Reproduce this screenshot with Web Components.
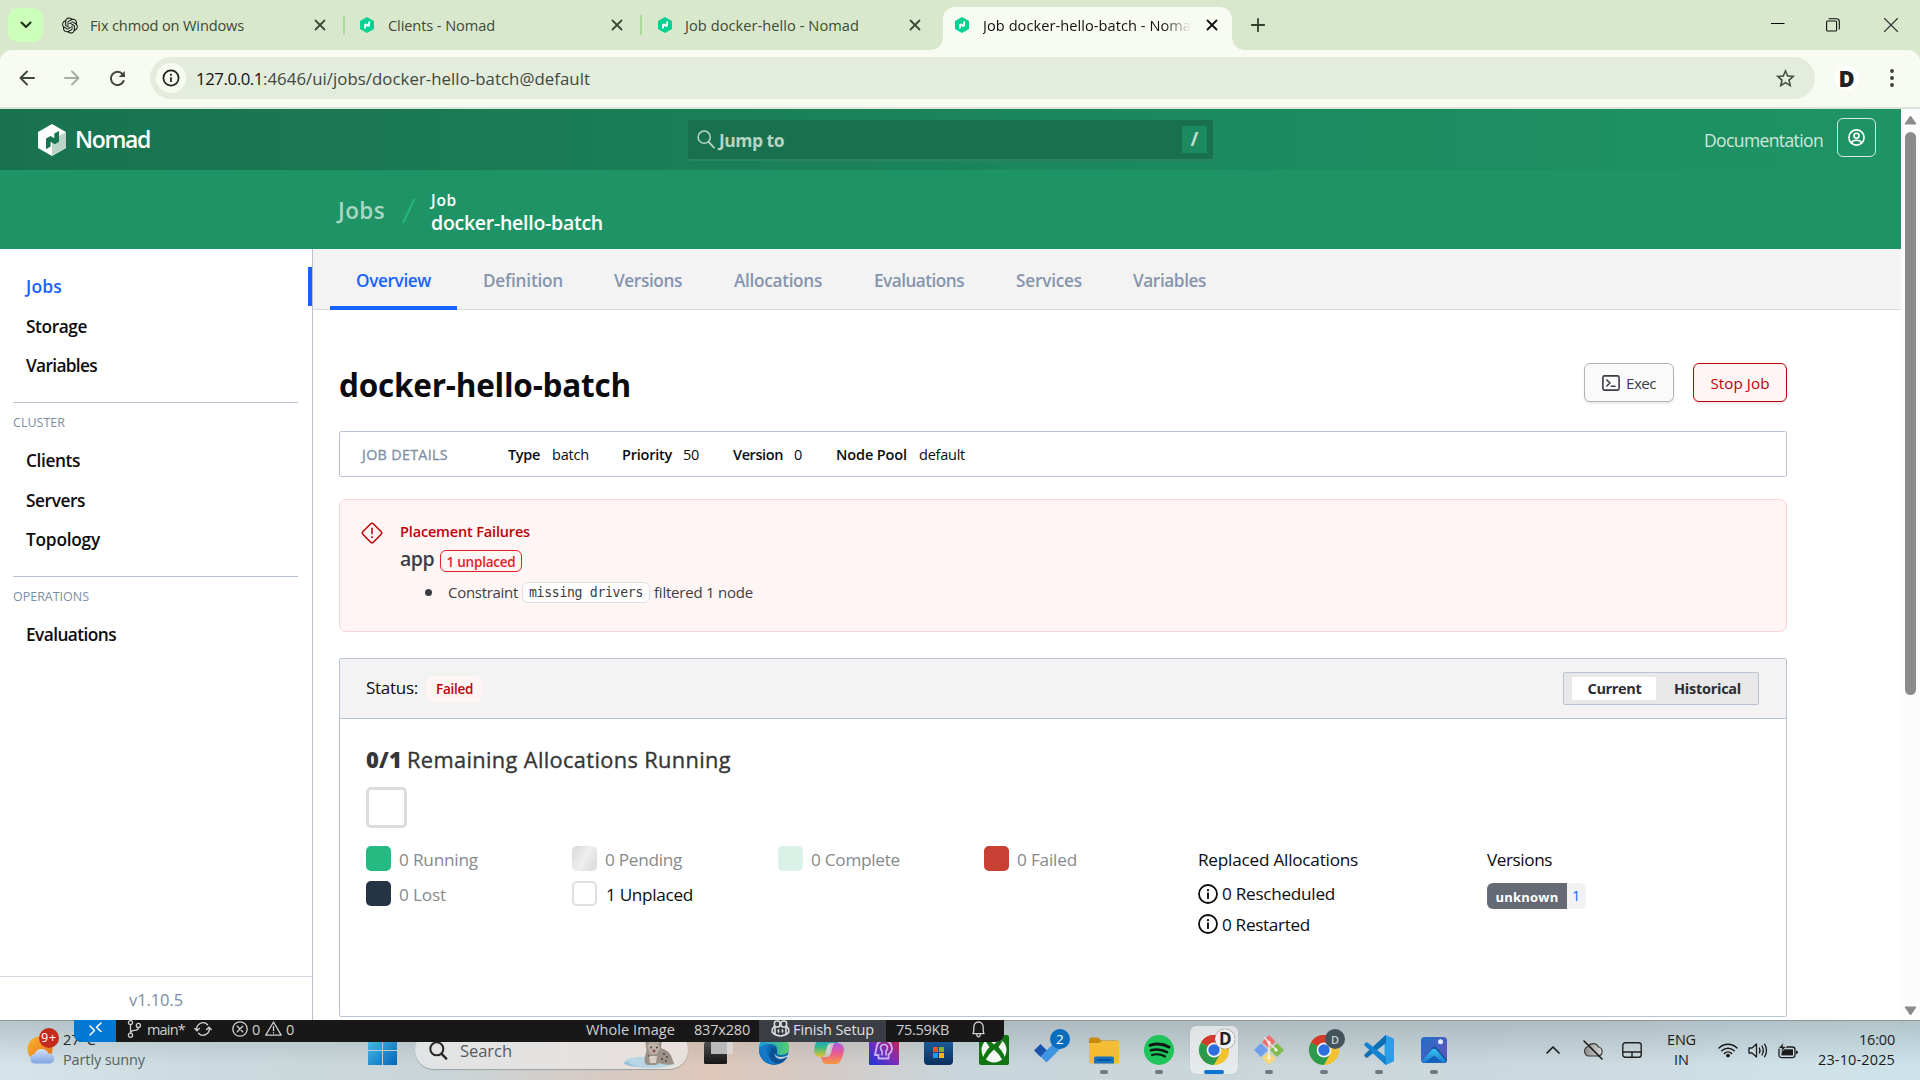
<!DOCTYPE html>
<html lang="en">
<head>
<meta charset="utf-8">
<title>Job docker-hello-batch - Nomad</title>
<style>
html,body{margin:0;padding:0;width:1920px;height:1080px;overflow:hidden;background:#fff}
body{font-family:"Open Sans","Noto Sans",sans-serif;color:#0c0c0e}
</style>
</head>
<body>
<desktop-screen></desktop-screen>
<script>
const FONT = '"Open Sans","Noto Sans",sans-serif';

/* Registers an element whose shadow root holds the given styles and markup. */
function define(name, css, html) {
  const t = document.createElement('template');
  t.innerHTML = `<style>*{box-sizing:border-box}${css}</style>${html}`;
  customElements.define(name, class extends HTMLElement {
    constructor() {
      super();
      this.attachShadow({ mode: 'open' }).append(t.content.cloneNode(true));
    }
  });
}

const S = (c, w = 1.6) => `fill="none" stroke="${c}" stroke-width="${w}" stroke-linecap="round" stroke-linejoin="round"`;
const chrome = `<circle cx="15" cy="15" r="15" fill="#f2c230"/>
 <path d="M15 15 2 7.5A15 15 0 0 1 28 7.5Z" fill="#d33a2c"/>
 <path d="M15 15 2 7.5A15 15 0 0 0 15 30L21.5 18.8Z" fill="#2b9a4a"/>
 <path d="M28 7.5A15 15 0 0 1 15 30L21.5 18.8 21 8Z" fill="#f2c230"/>
 <path d="M2 7.5A15 15 0 0 1 28 7.5H15Z" fill="#d33a2c"/>
 <circle cx="15" cy="15" r="7.4" fill="#f3f3f3"/><circle cx="15" cy="15" r="5.7" fill="#2c6de0"/>`;

const ICONS = {
  openai: [16, 17, '0 0 24 24', `<path fill="#101510" d="M22.2819 9.8211a5.9847 5.9847 0 0 0-.5157-4.9108 6.0462 6.0462 0 0 0-6.5098-2.9A6.0651 6.0651 0 0 0 4.9807 4.1818a5.9847 5.9847 0 0 0-3.9977 2.9 6.0462 6.0462 0 0 0 .7427 7.0966 5.98 5.98 0 0 0 .511 4.9107 6.051 6.051 0 0 0 6.5146 2.9001A5.9847 5.9847 0 0 0 13.2599 24a6.0557 6.0557 0 0 0 5.7718-4.2058 5.9894 5.9894 0 0 0 3.9977-2.9001 6.0557 6.0557 0 0 0-.7475-7.0729zm-9.022 12.6081a4.4755 4.4755 0 0 1-2.8764-1.0408l.1419-.0804 4.7783-2.7582a.7948.7948 0 0 0 .3927-.6813v-6.7369l2.02 1.1686a.071.071 0 0 1 .038.052v5.5826a4.504 4.504 0 0 1-4.4945 4.4944zm-9.6607-4.1254a4.4708 4.4708 0 0 1-.5346-3.0137l.142.0852 4.783 2.7582a.7712.7712 0 0 0 .7806 0l5.8428-3.3685v2.3324a.0804.0804 0 0 1-.0332.0615L9.74 19.9502a4.4992 4.4992 0 0 1-6.1408-1.6464zM2.3408 7.8956a4.485 4.485 0 0 1 2.3655-1.9728V11.6a.7664.7664 0 0 0 .3879.6765l5.8144 3.3543-2.0201 1.1685a.0757.0757 0 0 1-.071 0l-4.8303-2.7865A4.504 4.504 0 0 1 2.3408 7.872zm16.5963 3.8558L13.1038 8.364 15.1192 7.2a.0757.0757 0 0 1 .071 0l4.8303 2.7913a4.4944 4.4944 0 0 1-.6765 8.1042v-5.6772a.79.79 0 0 0-.407-.667zm2.0107-3.0231l-.142-.0852-4.7735-2.7818a.7759.7759 0 0 0-.7854 0L9.409 9.2297V6.8974a.0662.0662 0 0 1 .0284-.0615l4.8303-2.7866a4.4992 4.4992 0 0 1 6.6802 4.66zM8.3065 12.863l-2.02-1.1638a.0804.0804 0 0 1-.038-.0567V6.0742a4.4992 4.4992 0 0 1 7.3757-3.4537l-.142.0805L8.704 5.459a.7948.7948 0 0 0-.3927.6813zm1.0976-2.3654l2.602-1.4998 2.6069 1.4998v2.9994l-2.5974 1.4997-2.6067-1.4997Z"/>`],
  nomadfav: [14, 16, '0 0 14 16', `<path d="M7 0 14 4V12L7 16 0 12V4Z" fill="#06d092"/><path d="M4.2 7.3 6 6.4 8.2 7.6V4.9L10 4V8.9L8 9.9 6 8.8V11.1L4.2 12Z" fill="#fff"/>`],
  nomad: [28, 32, '0 0 28 32', `<path d="M14 0 28 8V24L14 32 0 24V8Z" fill="#fff"/><path d="M14 16 28 8V24L14 32Z" fill="#bad5c8"/><path d="M8 14.5 12.5 12 16.3 14.2V9.6L21 7V17.8L16.8 20.2 12.6 17.8V22.6L8 25.2Z" fill="#19754f"/>`],
  chev: [12, 8, '0 0 12 8', `<path d="M1.5 1.5 6 6 10.5 1.5" ${S('#18300f', 2.1)}/>`],
  x: [12, 12, '0 0 12 12', `<path d="M1.5 1.5 10.5 10.5M10.5 1.5 1.5 10.5" ${S('currentColor', 1.8)}/>`],
  plus: [14, 14, '0 0 14 14', `<path d="M7 .8V13.2M.8 7H13.2" ${S('#33402e', 1.8)}/>`],
  min: [14, 14, '0 0 14 14', `<path d="M0 5.5H13.5" stroke="#000" stroke-width="1"/>`],
  max: [14, 14, '0 0 14 14', `<rect x=".6" y="3" width="10" height="10" rx="1" ${S('#111', 1.1)}/><path d="M3 .7H10.5Q13.3 .7 13.3 3.4V11" ${S('#111', 1.1)}/>`],
  close: [14, 14, '0 0 14 14', `<path d="M.5 .5 13.5 13.5M13.5 .5 .5 13.5" ${S('#333', 1.1)}/>`],
  back: [16, 16, '0 0 16 16', `<path d="M15 8H1.5M8 1.5 1.5 8 8 14.5" ${S('currentColor', 1.9)}/>`],
  fwd: [16, 16, '0 0 16 16', `<path d="M1 8H14.5M8 1.5 14.5 8 8 14.5" ${S('currentColor', 1.9)}/>`],
  reload: [17, 17, '0 0 17 17', `<path d="M14.6 11A6.6 6.6 0 1 1 13.6 4.2L15 6" ${S('#3b4738', 2)}/><path d="M15.8 1V7H9.8Z" fill="#3b4738"/>`],
  info: [18, 18, '0 0 18 18', `<circle cx="9" cy="9" r="7.6" ${S('#1c211a', 1.7)}/><path d="M9 8.3V13" stroke="#1c211a" stroke-width="1.7"/><rect x="8.1" y="4.8" width="1.8" height="1.9" fill="#1c211a"/>`],
  infob: [20, 20, '0 0 20 20', `<circle cx="10" cy="10" r="9" ${S('#0c0c0e', 1.8)}/><path d="M10 9.2V14.2" ${S('#0c0c0e', 1.9)}/><circle cx="10" cy="6.1" r="1.2" fill="#0c0c0e"/>`],
  star: [23, 23, '0 0 24 24', `<path fill="#444b41" d="M22 9.24l-7.19-.62L12 2 9.19 8.63 2 9.24l5.46 4.73L5.82 21 12 17.27 18.18 21l-1.63-7.03L22 9.24zM12 15.4l-3.76 2.27 1-4.28-3.32-2.88 4.38-.38L12 6.1l1.71 4.04 4.38.38-3.32 2.88 1 4.28L12 15.4z"/>`],
  dots: [4, 20, '0 0 4 20', `<g fill="#33402e"><circle cx="2" cy="3" r="1.9"/><circle cx="2" cy="10" r="1.9"/><circle cx="2" cy="17" r="1.9"/></g>`],
  search: [18, 19, '0 0 18 19', `<circle cx="7.2" cy="7.2" r="6.1" ${S('#b5d5c5', 1.5)}/><path d="M11.6 11.8 17 17.6" ${S('#b5d5c5', 1.9)}/>`],
  user: [17, 17, '0 0 17 17', `<circle cx="8.5" cy="8.5" r="7.6" ${S('#fff', 1.6)}/><circle cx="8.5" cy="6.8" r="2.5" ${S('#fff', 1.6)}/><path d="M3.6 14C4.2 11.8 5.6 11.3 8.5 11.3S12.8 11.8 13.4 14" ${S('#fff', 1.6)}/>`],
  term: [18, 16, '0 0 18 16', `<rect x=".9" y=".9" width="16.2" height="14.2" rx="1.6" ${S('#3b3d45', 1.6)}/><path d="M4.8 5 8 8 4.8 11M9.3 11.3H13" ${S('#3b3d45', 1.6)}/>`],
  warn: [24, 24, '0 0 24 24', `<rect x="4.6" y="4.6" width="14.8" height="14.8" rx="1.8" transform="rotate(45 12 12)" ${S('#c00005', 1.5)}/><path d="M12 7.3V12.8" ${S('#c00005', 1.5)}/><circle cx="12" cy="16.2" r="1" fill="#c00005"/>`],
  remote: [13, 14, '0 0 13 14', `<path d="M1 4 5.5 8.5 1 13M12 1 7.5 5.2 12 9.5" ${S('#fff', 1.5)}/>`],
  branch: [14, 18, '0 0 14 18', `<g ${S('#d0d0d0', 1.3)}><circle cx="3.5" cy="2.6" r="2.1"/><circle cx="3.5" cy="15.2" r="2.1"/><circle cx="11.4" cy="5.4" r="2.1"/><path d="M3.5 5V13M11.4 7.6Q11.2 10.3 7.5 10.3 4 10.3 3.5 13"/></g>`],
  sync: [18, 16, '0 0 18 16', `<g ${S('#d0d0d0', 1.4)}><path d="M3 9.5A6.2 6.2 0 0 1 13.6 3.8M15 6.5A6.2 6.2 0 0 1 4.5 12.3"/><path d="M.8 7.6 3 9.8 5.4 7.6M12.6 8.6 15 6.3 17.2 8.6"/></g>`],
  err: [16, 16, '0 0 16 16', `<g ${S('#d0d0d0', 1.3)}><circle cx="8" cy="8" r="7.2"/><path d="M5.3 5.3 10.7 10.7M10.7 5.3 5.3 10.7"/></g>`],
  tri: [17, 15, '0 0 17 15', `<g ${S('#d0d0d0', 1.3)}><path d="M8.5 1 16.2 14.2H.8Z"/><path d="M8.5 5.5V9.7M8.5 11.7V12"/></g>`],
  copilot: [19, 17, '0 0 19 17', `<g ${S('#e0e0e0', 1.6)}><rect x="3.4" y="1" width="5.6" height="6" rx="2.2"/><rect x="10" y="1" width="5.6" height="6" rx="2.2"/><path d="M3.4 6.5 1.3 9V12.5Q5 16 9.5 16T17.7 12.5V9L15.6 6.5M4 8V13.5M15 8V13.5"/><path d="M7.5 10V12M11.5 10V12"/></g>`],
  bell: [15, 17, '0 0 15 17', `<g ${S('#d0d0d0', 1.3)}><path d="M2 12.7C3 11 2.8 9 2.8 6.2 2.8 3 4.8 1 7.5 1S12.2 3 12.2 6.2C12.2 9 12 11 13 12.7Z"/><path d="M5.8 13.5Q6 15.8 7.5 15.8T9.2 13.5"/></g>`],
  weather: [30, 30, '0 0 30 30', `<defs><linearGradient id="s" x1="0" y1="0" x2="1" y2="1"><stop offset="0" stop-color="#f7b52d"/><stop offset="1" stop-color="#ea6a1a"/></linearGradient><linearGradient id="c" x2="0" y2="1"><stop offset="0" stop-color="#d5e2f7"/><stop offset="1" stop-color="#7fa3e2"/></linearGradient></defs><circle cx="13" cy="14" r="12.5" fill="url(#s)"/><path d="M7.5 28.5A4.8 4.8 0 0 1 7.5 19 7.5 7.5 0 0 1 21.5 18.6 5 5 0 0 1 23 28.5Z" fill="url(#c)"/>`],
  win: [29, 29, '0 0 29 29', `<defs><linearGradient id="w" x2="1" y2="1"><stop offset="0" stop-color="#4cc2e8"/><stop offset="1" stop-color="#0564b8"/></linearGradient></defs><path d="M0 0H14V14H0ZM15 0H29V14H15ZM0 15H14V29H0ZM15 15H29V29H15Z" fill="url(#w)"/>`],
  tsearch: [19, 19, '0 0 19 19', `<circle cx="7.8" cy="7.8" r="6.5" ${S('#2a2a2a', 2.1)}/><path d="M12.6 12.8 17.3 17.6" ${S('#2a2a2a', 2.4)}/>`],
  lynx: [56, 36, '3 0 56 36', `<ellipse cx="28" cy="31" rx="25" ry="4.6" fill="#9cc3da"/><path d="M4 28Q15 24 30 25T54 32Q42 36 28 36T4 28Z" fill="#b7d5e4"/><path d="M24 31C22 25 27 20 25 15L24 7 29 11Q33 8 37 11L41 7 40 16Q49 19 51 26L53 32Q44 34 38 31L35 33H26Z" fill="#9b9188"/><path d="M26 13 29 11Q33 9 37 12L39 16 36 22H29Z" fill="#bcb2a6"/><path d="M28 24H36L35 31H29Z" fill="#d8d0c7"/><path d="M33 17 31 19 33 21 35 19Z" fill="#8f5a55"/><g fill="#4e463f"><circle cx="30" cy="15.5" r="1"/><circle cx="36" cy="15.5" r="1"/><circle cx="43" cy="22" r="1"/><circle cx="46" cy="25" r="1"/><circle cx="41" cy="27" r="1"/><circle cx="28" cy="24" r=".8"/><circle cx="45" cy="29" r=".9"/></g>`],
  task: [31, 30, '0 0 31 30', `<defs><linearGradient id="t" x2="0" y2="1"><stop offset="0" stop-color="#505050"/><stop offset="1" stop-color="#151515"/></linearGradient></defs><rect x="1" y="7" width="23" height="22" rx="1.5" fill="url(#t)"/><rect x="8" y="0" width="22" height="19" rx="1.5" fill="#e2e2e2" opacity=".65"/><rect x="8" y="7" width="16" height="12" fill="#b9b9b9"/>`],
  edge: [30, 30, '0 0 30 30', `<defs><linearGradient id="e" x2="1"><stop offset="0" stop-color="#1b9de2"/><stop offset="1" stop-color="#52cc6b"/></linearGradient></defs><circle cx="15" cy="15" r="15" fill="#0b67b2"/><path d="M0 14A15 15 0 0 1 30 13Q30 20 22.5 20 17.5 20 18 17.5 19.5 9 11 9 4 9 0 14Z" fill="url(#e)"/><path d="M0 14Q4 9 11 9 7 12 8.5 19T19 28Q10 31 4 25 0 20 0 14Z" fill="#1478c6"/><path d="M18 17.2Q13 22 18 24T28.5 21.8Q25 28 19 28.5 12 28 10.8 21 10 14 15 12 18.5 13.5 18 17.2Z" fill="#0d4f93"/><path d="M15.5 18Q16.4 22 22 22 26 22 29 20L30 13 30 23 27.5 22Q24 24.5 20 23.8 15.5 22.6 15.5 18Z" fill="#c2ced3"/>`],
  copilotw: [30, 30, '0 0 30 30', `<defs><linearGradient id="p1" x2="0" y2="1"><stop offset="0" stop-color="#1a86e8"/><stop offset=".5" stop-color="#2fb98e"/><stop offset="1" stop-color="#e7c42a"/></linearGradient><linearGradient id="p2" x2="0" y2="1"><stop offset="0" stop-color="#a85be6"/><stop offset=".5" stop-color="#ec5a8f"/><stop offset="1" stop-color="#f49a3e"/></linearGradient></defs><path d="M8 1H19Q22 1 23 5L24 8H17Q14 8 13 12L11 19Q10 23 6 22 0 21 0 15 1 9 3 5 4.500 1 8 1Z" fill="url(#p1)"/><path d="M22 29H12Q9 29 8 25L7 22H13Q16 22 17 18L19 11Q20 7 24 8 30 9 30 15 29 21 27 25 25.500 29 22 29Z" fill="url(#p2)"/><path d="M14 9.500H17.500L15.500 19H12Z" fill="#cbd3d5"/>`],
  purple: [30, 30, '0 0 30 30', `<defs><linearGradient id="u" x1="0" y1="1" x2="1" y2="0"><stop offset="0" stop-color="#1a35e0"/><stop offset=".5" stop-color="#7c2db5"/><stop offset="1" stop-color="#e01a3c"/></linearGradient></defs><rect width="30" height="30" rx="1" fill="url(#u)"/><path d="M9.500 23.500V20H6L7.500 13Q8 5.500 15 5.500T23 13Q23 17 19.500 19.500V23.500Z" ${S('#cdb6ec', 1.8)}/><path d="M13 20V16Q11.500 14.500 11.500 12.500 11.800 9.500 15 9.500T18.500 12.500Q18.500 14.500 17 16V20" ${S('#cdb6ec', 1.6)}/>`],
  store: [29, 30, '0 0 29 30', `<defs><linearGradient id="o" x2="0" y2="1"><stop offset="0" stop-color="#1f66a6"/><stop offset="1" stop-color="#0b2f5e"/></linearGradient></defs><rect y="1" width="29" height="29" rx="4" fill="url(#o)"/><path fill="#e8532a" d="M9 12h5v5H9z"/><path fill="#7cb928" d="M15 12h5v5h-5z"/><path fill="#1b9be5" d="M9 18h5v5H9z"/><path fill="#f6ba1a" d="M15 18h5v5h-5z"/>`],
  xbox: [30, 30, '0 0 30 30', `<rect width="30" height="30" rx="2" fill="#107410"/><circle cx="15" cy="15" r="12.500" fill="#f4f7f4"/><path d="M6 5.500Q10 4.500 15 9.500 20 4.500 24 5.500L19.500 12Q26 19 26 25L23.500 25Q20 18.500 15 14.500 10 18.500 6.500 25L4 25Q4 19 10.500 12Z" fill="#107410"/>`],
  todo: [30, 30, '0 0 30 30', `<path d="M6.500 9 13 15.500 6.500 22 0 15.500Z" fill="#1b52ac"/><path d="M6.500 21.500 24 4 30 10 12.500 27.500Z" fill="#3e96e2"/>`],
  folder: [30, 30, '0 0 30 30', `<path d="M0 5Q0 2.500 2 2.500H9L12.500 5.500H28Q30 5.500 30 8V20H0Z" fill="#c68a0c"/><path d="M0 8H10L13 6H28Q30 6 30 8V27Q30 28.500 28.500 28.500H1.500Q0 28.500 0 27Z" fill="#f5bd36"/><path d="M5 28.500V23.500Q5 21.500 7 21.500H23Q25 21.500 25 23.500V28.500Z" fill="#1373c4"/><path d="M8.500 25H21.500" ${S('#0b4b8e', 1.3)}/>`],
  spotify: [30, 30, '0 0 30 30', `<circle cx="15" cy="15" r="15" fill="#1fc45a"/><g fill="none" stroke="#0f1512" stroke-linecap="round"><path d="M6 10.300Q16 7 25 12" stroke-width="3"/><path d="M7 15.300Q15.500 13 23 17.200" stroke-width="2.600"/><path d="M8 20Q15 18 21 21.500" stroke-width="2.100"/></g>`],
  chrome: [30, 30, '0 0 30 30', chrome],
  git: [30, 30, '0 0 30 30', `<path d="M15 0 21.500 6.500 15 13.500 8 7Z" fill="#ef6f70"/><path d="M23 8 30 15 23 22 16 15Z" fill="#7fbc4a"/><path d="M7 8 14 15 7 22 0 15Z" fill="#719fea"/><path d="M15 17 22 23.500 15 30 8 23Z" fill="#f6d878"/><g ${S('#f3f0e8', 1.4)}><path d="M11 3 15 7.500V23M16 9 22 14.500"/><circle cx="15" cy="7.500" r="1"/><circle cx="15" cy="23" r="1"/><circle cx="22" cy="15" r="1"/></g>`],
  vscode: [30, 30, '0 0 30 30', `<path d="M22 0 29 3.200Q30 3.800 30 5V25Q30 26.200 29 26.800L22 30 20.500 28.500V1.500Z" fill="#2a9fe8"/><path d="M22 0V8L3.500 22.500Q2.600 23 1.900 22.500L.4 21Q-.2 20.200 .5 19.500L20.500 1Z" fill="#0f6fb5"/><path d="M22 30V22L3.500 7.500Q2.600 7 1.900 7.500L.4 9Q-.2 9.800 .5 10.500L20.500 29Z" fill="#1583cf"/>`],
  photos: [26, 26, '0 0 26 26', `<defs><linearGradient id="h" x2="1" y2="1"><stop offset="0" stop-color="#1f6fc8"/><stop offset="1" stop-color="#6b52b8"/></linearGradient><linearGradient id="m" x2="0" y2="1"><stop offset="0" stop-color="#35c7ef"/><stop offset="1" stop-color="#1b76d0"/></linearGradient></defs><rect width="26" height="26" rx="3.500" fill="url(#h)"/><path d="M1 24 11.500 10.500Q13.500 8.500 15.500 10.500L26 22.500Q26 26 22.500 26H3.500Q1.500 26 1 24Z" fill="#1452a5"/><path d="M.8 23.800 10.500 13Q13 10.500 15.500 13L25 24Q24.500 26 22.500 26H3.500Q1.500 26 .8 23.800Z" fill="url(#m)"/><path d="M4 25.800 13 18.500 22 25.800Z" fill="#1560bd"/><circle cx="19.500" cy="4.800" r="2.500" fill="#e3edf7"/>`],
  up: [16, 10, '0 0 16 10', `<path d="M2 8 8 2 14 8" ${S('#1b1b1b', 1.7)}/>`],
  cloud: [22, 20, '0 0 22 20', `<defs><linearGradient id="g" x2="1"><stop offset="0" stop-color="#8b8b8b"/><stop offset="1" stop-color="#d8d8d8"/></linearGradient></defs><path d="M6 16A5 5 0 0 1 6 6.500 6 6 0 0 1 16.500 7 4.600 4.600 0 0 1 16.500 16Z" fill="url(#g)" stroke="#3e3e3e" stroke-width="1.200"/><path d="M2 1 20 19" ${S('#111', 1.5)}/>`],
  pad: [20, 16, '0 0 20 16', `<g ${S('#222', 1.4)}><rect x=".8" y=".8" width="18.400" height="14.400" rx="2.500"/><path d="M.8 10H19.200M10 10V15"/></g>`],
  wifi: [20, 16, '0 0 20 16', `<g ${S('#1b1b1b', 1.5)}><path d="M1 6A12.500 12.500 0 0 1 19 6M3.800 8.800A8.800 8.800 0 0 1 16.200 8.800M6.500 11.400A5 5 0 0 1 13.500 11.400"/></g><circle cx="10" cy="13.600" r="1.900" fill="#1b1b1b"/>`],
  vol: [20, 17, '0 0 20 17', `<g ${S('#1b1b1b', 1.3)}><path d="M1 6H4L8.500 2V15L4 11H1Z"/><path d="M11.300 6Q12.800 8.500 11.300 11M14 4Q16.600 8.500 14 13M16.600 2.200Q20.500 8.500 16.600 14.800"/></g>`],
  batt: [20, 17, '0 0 20 17', `<rect x="1" y="5" width="16" height="10.600" rx="2.500" ${S('#1b1b1b', 1.3)}/><path d="M3.500 7.300H15V13.400H3.500Z" fill="#1b1b1b"/><path d="M18 8.500Q20 8.500 20 10.300T18 12Z" fill="#1b1b1b"/><path d="M5.500 0 .5 6.500H4L2.500 11 8.500 4.500H5Z" fill="#1b1b1b" stroke="#c4d2d8" stroke-width=".8"/>`]
};

customElements.define('ui-icon', class extends HTMLElement {
  connectedCallback() {
    if (this.shadowRoot) return;
    const [w, h, vb, body] = ICONS[this.getAttribute('name')];
    this.attachShadow({ mode: 'open' }).innerHTML =
      `<style>:host{display:block;flex:none;width:${w}px;height:${h}px}svg{display:block;overflow:visible}</style>
       <svg width="${w}" height="${h}" viewBox="${vb}">${body}</svg>`;
  }
});

define('browser-tab', `
:host{display:flex;align-items:center;flex:none;height:43px;position:relative;color:#3c4a37}
:host([active]){background:#f8fbf2;border-radius:12px 12px 0 0;color:#111}
:host([active])::before,:host([active])::after{content:"";position:absolute;bottom:0;width:12px;height:12px}
:host([active])::before{left:-12px;background:radial-gradient(circle at 0 0,transparent 11.5px,#f8fbf2 12px)}
:host([active])::after{right:-12px;background:radial-gradient(circle at 100% 0,transparent 11.5px,#f8fbf2 12px)}
`, `<slot></slot>`);

define('tab-strip', `
:host{display:flex;height:50px;background:#d9e8cd;padding-top:7px;align-items:flex-start}
.row{display:flex;align-items:center;height:36px;flex:1}
.dd{width:35px;height:34px;border-radius:10px;background:#ccffba;display:flex;align-items:center;justify-content:center;margin-left:8px}
.sep{width:2px;height:20px;background:#a8d998;border-radius:1px;flex:none}
.fade{-webkit-mask-image:linear-gradient(90deg,#000 180px,transparent 208px);mask-image:linear-gradient(90deg,#000 180px,transparent 208px)}
`, `<div class="row"><div class="dd"><ui-icon name="chev"></ui-icon></div>
<browser-tab style="width:298px;padding-left:19px"><ui-icon name="openai"></ui-icon><fit-text style="margin-left:12px" w="154" s="14.600">Fix chmod on Windows</fit-text><ui-icon name="x" style="margin-left:70px"></ui-icon></browser-tab>
<div class="sep" style="margin-left:2px"></div>
<browser-tab style="width:295px;padding-left:15px"><ui-icon name="nomadfav"></ui-icon><fit-text style="margin-left:14px" w="107" s="14.600">Clients - Nomad</fit-text><ui-icon name="x" style="margin-left:116px"></ui-icon></browser-tab>
<div class="sep"></div>
<browser-tab style="width:301px;padding-left:16px"><ui-icon name="nomadfav"></ui-icon><fit-text style="margin-left:13px" w="174" s="14.600">Job docker-hello - Nomad</fit-text><ui-icon name="x" style="margin-left:50px"></ui-icon></browser-tab>
<browser-tab active style="width:289px;padding-left:12px;margin-top:7px"><ui-icon name="nomadfav" style="margin-top:-7px"></ui-icon><fit-text class="fade" style="margin-left:14px;margin-top:-7px" w="208" s="14.600">Job docker-hello-batch - Noma</fit-text><ui-icon name="x" style="margin-left:15px;margin-top:-7px"></ui-icon></browser-tab>
<ui-icon name="plus" style="margin-left:19px"></ui-icon>
<ui-icon name="min" style="margin-left:506px"></ui-icon><ui-icon name="max" style="margin-left:41px"></ui-icon><ui-icon name="close" style="margin-left:44px"></ui-icon></div>`);

define('address-bar', `
:host{display:block;height:59px;background:#d9e8cd}
.bar{display:flex;height:59px;background:#f8fbf2;border-bottom:2px solid #dde5d8;border-radius:12px 12px 0 0;align-items:center;padding:0 0 1px 19px}
.omni{display:flex;align-items:center;width:1665px;height:42px;border-radius:21px;background:#e3ecdd;padding-left:6px}
.i{width:30px;height:30px;border-radius:50%;background:#f8fbf2;display:flex;align-items:center;justify-content:center}
.d{width:24px;height:24px;border-radius:50%;background:#fff;margin-left:20px;display:flex;align-items:center;justify-content:center}
`, `<div class="bar"><ui-icon name="back" style="color:#3b4738"></ui-icon><ui-icon name="fwd" style="margin-left:29px;color:#a5aca0"></ui-icon><ui-icon name="reload" style="margin-left:29px"></ui-icon>
<div class="omni" style="margin-left:24px"><div class="i"><ui-icon name="info"></ui-icon></div>
<fit-text style="margin:2px 0 0 10px" w="67" s="16.800" c="#111">127.0.0.1</fit-text><fit-text style="margin-top:2px" w="327" s="16.800" c="#40483d">:4646/ui/jobs/docker-hello-batch@default</fit-text>
<ui-icon name="star" style="margin-left:1184px"></ui-icon></div>
<div class="d"><fit-text w="17" s="22" b="800" c="#222">D</fit-text></div><ui-icon name="dots" style="margin-left:31px"></ui-icon></div>`);

define('nomad-header', `
:host{display:block}
.top{height:61px;background:linear-gradient(90deg,#19724f 0,#1a7c56 30%,#1c8a60 65%,#1e9466 100%);display:flex;align-items:center}
.jump{width:525px;height:39px;border-radius:3px;background:#18704e;box-shadow:0 2px 0 #2b8460;margin-left:538px;display:flex;align-items:center;padding-left:9px}
.k{width:25px;height:27px;background:#1c8a61;margin-left:397px;display:flex;align-items:center;justify-content:center}
.u{width:39px;height:39px;border:1px solid #d5ebe1;border-radius:6px;margin:-4px 0 0 14px;display:flex;align-items:center;justify-content:center}
.sub{height:79px;background:#1e9466;display:flex;align-items:center;padding-left:338px}
.col{display:flex;flex-direction:column;gap:0;margin:4px 0 0 15px}
`, `<div class="top"><ui-icon name="nomad" style="margin-left:38px"></ui-icon><fit-text style="margin:-1px 0 0 9px" w="75" s="23" b="600" c="#fff">Nomad</fit-text>
<div class="jump"><ui-icon name="search"></ui-icon><fit-text style="margin-left:4px;margin-top:1px" w="65" s="17.500" b="700" c="#b5d5c5">Jump to</fit-text><div class="k" style="margin-left:398px"><fit-text w="8" s="19" b="700" c="#c3ddd0">/</fit-text></div></div>
<fit-text style="margin-left:491px;margin-top:2px" w="119" s="17.500" c="#cfe8dc">Documentation</fit-text><div class="u"><ui-icon name="user"></ui-icon></div></div>
<div class="sub"><fit-text w="47" s="22.500" b="600" c="#a9d6c2" style="margin-top:2px">Jobs</fit-text>
<svg width="15" height="26" viewBox="0 0 15 26" style="margin:3px 0 0 16px"><path d="M2 25 13.500 1" stroke="#26b57f" stroke-width="2"/></svg>
<div class="col"><fit-text w="26" s="15.500" b="600" c="#fff" lh="22">Job</fit-text><fit-text w="172" s="19.500" b="600" c="#fff" lh="24">docker-hello-batch</fit-text></div></div>`);

define('side-nav', `
:host{display:flex;flex-direction:column;width:313px;height:771px;border-right:1px solid #bac1cc;background:#fff;flex:none}
.n{height:39.600px;display:flex;align-items:center;padding-left:26px}
.on{border-right:4px solid #1563ff;height:39px}
hr{border:0;height:1px;background:#b7c2d0;margin:16px 14px 0 13px;flex:none}
.h{height:40px;display:flex;align-items:center;padding-left:13px}
.f{margin-top:auto;height:44px;border-top:1px solid #d1d8e2;display:flex;align-items:center;justify-content:center}
`, `<div class="n on" style="margin-top:18px"><fit-text w="36" s="17.500" b="600" c="#1563ff">Jobs</fit-text></div>
<div class="n" style="margin-top:1px"><fit-text w="61" s="17.300" b="600">Storage</fit-text></div>
<div class="n"><fit-text w="71" s="17.300" b="600">Variables</fit-text></div>
<hr><div class="h"><fit-text w="52" s="12.5" c="#7d8da3">CLUSTER</fit-text></div>
<div class="n" style="margin-top:-2px"><fit-text w="54" s="17.300" b="600">Clients</fit-text></div>
<div class="n"><fit-text w="59" s="17.300" b="600">Servers</fit-text></div>
<div class="n"><fit-text w="74" s="17.300" b="600">Topology</fit-text></div>
<hr><div class="h"><fit-text w="76" s="12.5" c="#7d8da3">OPERATIONS</fit-text></div>
<div class="n" style="margin-top:-2px"><fit-text w="90" s="17.300" b="600">Evaluations</fit-text></div>
<div class="f"><fit-text w="54" s="16.5" c="#7d8da3" style="margin-top:2px">v1.10.5</fit-text></div>`);

define('tab-nav', `
:host{display:flex;height:61px;background:#f3f3f3;border-bottom:1px solid #d9dbdf;padding-left:17px}
div{height:61px;padding:6px 26px 0;display:flex;align-items:center;border-bottom:4px solid transparent}
.on{border-color:#1563ff}
`, `<div class="on"><fit-text w="75" s="17.200" b="600" c="#1563ff">Overview</fit-text></div>
<div><fit-text w="80" s="17.200" b="600" c="#8695ae">Definition</fit-text></div>
<div style="padding-left:25px"><fit-text w="68" s="17.200" b="600" c="#8695ae">Versions</fit-text></div>
<div><fit-text w="88" s="17.200" b="600" c="#8695ae">Allocations</fit-text></div>
<div><fit-text w="90" s="17.200" b="600" c="#8695ae">Evaluations</fit-text></div>
<div><fit-text w="66" s="17.200" b="600" c="#8695ae">Services</fit-text></div>
<div style="padding-left:25px"><fit-text w="73" s="17.200" b="600" c="#8695ae">Variables</fit-text></div>`);

define('ui-button', `
:host{display:flex;align-items:center;justify-content:center;height:39px;border:1px solid #b0b3b8;border-radius:6px;background:#fafafa;box-shadow:0 2px 2px rgba(60,60,70,.1);flex:none;box-sizing:border-box}
:host([danger]){border-color:#c00005;background:#fff5f5}
`, `<slot></slot>`);

define('job-title', `
:host{display:flex;height:39px;align-items:center;margin-top:53px}
`, `<fit-text w="292" s="31.500" b="700" style="margin-top:5px">docker-hello-batch</fit-text>
<ui-button style="width:90px;margin-left:953px"><ui-icon name="term"></ui-icon><fit-text style="margin:2px 0 0 6px" w="30" s="15.200" c="#3b3d45">Exec</fit-text></ui-button>
<ui-button danger style="width:94px;margin-left:19px"><fit-text w="59" s="15.200" c="#c00005" style="margin-top:2px">Stop Job</fit-text></ui-button>`);

define('job-details', `
:host{display:flex;height:46px;align-items:center;margin-top:29px;border:1px solid #bac5d2;border-radius:2px;padding:2px 0 0 22px;box-sizing:border-box}
fit-text{margin-left:12px}fit-text[b]{margin-left:34px}
`, `<fit-text w="86" s="14.300" c="#7d8da3" style="margin-left:0;-webkit-text-stroke:.3px #7d8da3">JOB DETAILS</fit-text>
<fit-text w="32" s="14.500" b="600" style="margin-left:60px">Type</fit-text><fit-text w="37" s="14.500">batch</fit-text>
<fit-text w="50" s="14.500" b="600" style="margin-left:33px">Priority</fit-text><fit-text w="16" s="14.500" style="margin-left:11px">50</fit-text>
<fit-text w="50" s="14.500" b="600">Version</fit-text><fit-text w="8" s="14.500" style="margin-left:11px">0</fit-text>
<fit-text w="71" s="14.500" b="600">Node Pool</fit-text><fit-text w="46" s="14.500" style="margin-left:12px">default</fit-text>`);

define('placement-alert', `
:host{display:flex;height:133px;margin-top:22px;border:1px solid #fbd4d4;border-radius:7px;background:#fff5f5;padding:20px 0 0 20px;box-sizing:border-box}
.c{display:flex;flex-direction:column;margin-left:16px}
.r{display:flex;align-items:center}
.b{width:82px;height:22px;border:1px solid #e52228;border-radius:6px;background:#fff5f5;margin-left:5px;display:flex;align-items:center;justify-content:center}
.m{width:128px;height:21px;border:1px solid #dedfe3;border-radius:6px;background:#fff;margin-left:4px;display:flex;align-items:center;justify-content:center}
.dot{width:7px;height:7px;border-radius:50%;background:#3b3d45;margin-left:25px}
`, `<ui-icon name="warn" style="margin-top:1px"></ui-icon><div class="c">
<div class="r" style="height:24px"><fit-text w="130" s="14.500" b="600" c="#c00005">Placement Failures</fit-text></div>
<div class="r" style="height:33px"><fit-text w="34" s="19.500" b="600" c="#3b3d45" style="margin-top:-4px">app</fit-text><div class="b" style="margin-top:1px;margin-left:6px"><fit-text w="69" s="13.500" b="600" c="#e52228" style="margin-top:2px">1 unplaced</fit-text></div></div>
<div class="r" style="height:31px"><div class="dot"></div><fit-text w="70" s="15" c="#3b3d45" style="margin-left:16px">Constraint</fit-text><div class="m"><fit-text mono w="114" s="13.200" c="#3b3d45">missing drivers</fit-text></div><fit-text w="99" s="15" c="#3b3d45" style="margin-left:4px">filtered 1 node</fit-text></div></div>`);

define('legend-item', `
:host{display:flex;align-items:center;height:25px;color:#858a8f}
i{display:block;width:25px;height:25px;border-radius:5px;background:var(--sw);margin-right:8px;flex:none}
:host([empty]) i{border:2px solid #dfdfdf;background:#fff}
:host([empty]){color:#0c0c0e}
::slotted(fit-text){margin-top:2px}
`, `<i></i><slot></slot>`);

define('status-panel', `
:host{display:block;height:359px;margin-top:26px;border:1px solid #bac5d2;border-radius:2px;box-sizing:border-box}
.head{height:60px;background:#f3f3f3;border-bottom:1px solid #bac5d2;display:flex;align-items:center;padding-left:26px}
.f{width:55px;height:26px;border-radius:6px;background:#fff5f5;display:flex;align-items:center;justify-content:center;margin-left:9px}
.tg{width:196px;height:33px;border:1px solid #bac5d2;border-radius:2px;background:#e8e8e8;margin-left:1081px;display:flex;align-items:center;padding-left:8px}
.cur{width:84px;height:23px;background:#fff;border-radius:2px;display:flex;align-items:center;justify-content:center}
.body{padding:24px 0 0 26px}
.l{display:flex;align-items:center;height:32px}
.sq{width:41px;height:41px;border:3px solid #dcdcdc;border-radius:5px;margin-top:12px}
.cols{display:flex;margin-top:18px}
.g{display:grid;grid-template-columns:repeat(4,206px);grid-auto-rows:25px;row-gap:10px;width:832px}
.r{display:flex;align-items:center}
.ver{display:flex;height:26px;width:99px;border-radius:6px;overflow:hidden;background:#f1f2f3;margin-top:10px}
.ver div{width:80px;background:#656a76;display:flex;align-items:center;justify-content:center}
`, `<div class="head"><fit-text w="52" s="17" style="margin-top:-1px">Status:</fit-text><div class="f"><fit-text w="37" s="13.500" b="600" c="#c00005" style="margin-top:2px">Failed</fit-text></div>
<div class="tg"><div class="cur"><fit-text w="54" s="14.500" b="700" c="#2b2d35" style="margin-left:1px">Current</fit-text></div><fit-text w="67" s="14.500" b="700" c="#2b2d35" style="margin-left:18px">Historical</fit-text></div></div>
<div class="body"><div class="l"><fit-text w="36" s="22" b="800" c="#363636">0/1</fit-text><fit-text w="324" s="21.800" c="#363636" style="margin-left:5px;-webkit-text-stroke:.35px #363636">Remaining Allocations Running</fit-text></div>
<div class="sq"></div>
<div class="cols"><div class="g">
<legend-item style="--sw:#25ba81"><fit-text w="79" s="17.200">0 Running</fit-text></legend-item>
<legend-item style="--sw:linear-gradient(120deg,#dedede 15%,#efefef 50%,#dedede 85%)"><fit-text w="77" s="17.200">0 Pending</fit-text></legend-item>
<legend-item style="--sw:#d9f1e6"><fit-text w="89" s="17.200">0 Complete</fit-text></legend-item>
<legend-item style="--sw:#c84034"><fit-text w="60" s="17.200">0 Failed</fit-text></legend-item>
<legend-item style="--sw:#243444"><fit-text w="47" s="17.200">0 Lost</fit-text></legend-item>
<legend-item empty><fit-text w="87" s="17.200" style="margin-left:1px">1 Unplaced</fit-text></legend-item></div>
<div><div class="r" style="height:27px"><fit-text w="160" s="17.200">Replaced Allocations</fit-text></div>
<div class="r" style="height:31px;margin-top:5px"><ui-icon name="infob"></ui-icon><fit-text style="margin:1px 0 0 4px" w="113" s="17.200">0 Rescheduled</fit-text></div>
<div class="r" style="height:30px"><ui-icon name="infob"></ui-icon><fit-text style="margin:1px 0 0 4px" w="88" s="17.200">0 Restarted</fit-text></div></div>
<div style="margin-left:129px"><div class="r" style="height:27px"><fit-text w="65" s="17.200">Versions</fit-text></div>
<div class="ver"><div><fit-text w="63" s="13" b="700" c="#fff" style="margin-top:2px">unknown</fit-text></div><fit-text w="7" s="14.500" c="#1563ff" style="margin:3px 0 0 5px">1</fit-text></div></div>
</div></div>`);

define('nomad-app', `
:host{display:flex;height:911px;background:#fff}
.page{width:1901px;overflow:hidden}
.m{display:flex}
.main{flex:1}
.pad{padding:0 115px 0 26px}
.sb{width:19px;background:#fcfcfc;display:flex;flex-direction:column;align-items:center;padding-left:0}
.th{width:11px;height:563px;border-radius:6px;background:#8b8b8b;margin-top:7px}
`, `<div class="page"><nomad-header></nomad-header><div class="m"><side-nav></side-nav><div class="main"><tab-nav></tab-nav><div class="pad"><job-title></job-title><job-details></job-details><placement-alert></placement-alert><status-panel></status-panel></div></div></div></div>
<div class="sb"><svg width="13" height="10" style="margin-top:6px" viewBox="0 0 13 10"><path d="M6.500 1 12 9H1Z" fill="#8b8b8b" stroke="#8b8b8b" stroke-linejoin="round"/></svg><div class="th"></div><svg width="13" height="10" style="margin:auto 0 4px" viewBox="0 0 13 10"><path d="M6.500 9 12 1H1Z" fill="#8b8b8b" stroke="#8b8b8b" stroke-linejoin="round"/></svg></div>`);

define('status-strip', `
:host{position:absolute;left:74px;top:-1px;width:930px;height:22px;background:#181818;border-radius:0 0 8px 8px;overflow:hidden;display:flex;align-items:center}
.b{width:42px;height:22px;background:#0078d4;display:flex;align-items:center;justify-content:center}
.fs{width:127px;height:22px;background:#3a3d44;margin-left:9px;display:flex;align-items:center;padding-left:12px}
`, `<div class="b"><ui-icon name="remote" style="margin-top:-5px"></ui-icon></div>
<ui-icon name="branch" style="margin-left:11px;margin-top:-4px"></ui-icon><fit-text w="38" s="14.500" c="#d0d0d0" style="margin-left:6px;margin-top:-3px">main*</fit-text>
<ui-icon name="sync" style="margin-left:9px;margin-top:-4px"></ui-icon><ui-icon name="err" style="margin-left:20px;margin-top:-4px"></ui-icon><fit-text w="8" s="14.500" c="#d0d0d0" style="margin-left:4px;margin-top:-3px">0</fit-text>
<ui-icon name="tri" style="margin-left:5px;margin-top:-5px"></ui-icon><fit-text w="8" s="14.500" c="#d0d0d0" style="margin-left:4px;margin-top:-3px">0</fit-text>
<fit-text w="89" s="14.500" c="#d0d0d0" style="margin-left:292px;margin-top:-3px">Whole Image</fit-text><fit-text w="56" s="14.500" c="#d0d0d0" style="margin-left:19px;margin-top:-3px">837x280</fit-text>
<div class="fs"><ui-icon name="copilot" style="margin-top:-5px"></ui-icon><fit-text w="81" s="14.500" c="#e0e0e0" style="margin-left:3px;margin-top:-3px">Finish Setup</fit-text></div>
<fit-text w="53" s="14.500" c="#d0d0d0" style="margin-left:10px;margin-top:-3px">75.59KB</fit-text><ui-icon name="bell" style="margin-left:22px;margin-top:-4px"></ui-icon>`);

define('task-app', `
:host{display:flex;flex:none;position:relative;width:55px;height:60px;align-items:center;justify-content:center}
:host([active])::before{content:"";position:absolute;left:4px;top:6px;width:48px;height:48px;border-radius:6px;background:rgba(240,241,241,.72);box-shadow:0 0 1px #999}
:host([run])::after{content:"";position:absolute;left:24px;top:50px;width:8px;height:4px;border-radius:2px;background:#70797d}
:host([active])::after{content:"";position:absolute;left:18px;top:50px;width:20px;height:4px;border-radius:2px;background:#0b74d1}
::slotted(ui-icon){position:relative}
::slotted(b){position:absolute;left:29px;top:9px;width:20px;height:20px;border-radius:50%;display:flex;align-items:center;justify-content:center}
`, `<slot></slot>`);

define('task-bar', `
:host{display:flex;align-items:center;height:60px;position:relative;border-top:1px solid #8f999c;box-sizing:border-box;padding-bottom:1px;
background:linear-gradient(180deg,rgba(70,85,90,.22),rgba(70,85,90,0) 75%),linear-gradient(90deg,#d5e5e9 0,#cbd9de 12%,#cad5d8 23%,#d6cbc5 31%,#dfc7b9 37%,#d3cbc8 43%,#c9d6db 50%,#cad6da 65%,#cbd8dd 80%,#cfe2e8 93%,#cde3e9 100%)}
.w{display:flex;width:365px;height:60px;padding-left:27px;align-items:center}
.wi{position:relative}
.wi b{position:absolute;left:12px;top:-7px;width:20px;height:20px;border-radius:50%;background:#c42b1c;display:flex;align-items:center;justify-content:center}
.c{display:flex;flex-direction:column;margin-left:7px}
.s{width:273px;height:38px;border-radius:19px;background:linear-gradient(90deg,#e1e4e5,#e8e0dc);box-shadow:0 1px 1px #96a0a2;display:flex;align-items:center;padding-left:14px;margin-left:18px}
.right{text-align:right;align-items:flex-end}
`, `<div class="w"><div class="wi"><ui-icon name="weather"></ui-icon><b><fit-text w="16" s="12.500" c="#fff">9+</fit-text></b></div><div class="c" style="margin-left:6px"><fit-text w="33" s="14.500" lh="20" c="#26292a">27°C</fit-text><fit-text w="82" s="14.500" lh="20" c="#585f61">Partly sunny</fit-text></div></div>
<ui-icon name="win" style="margin-left:3px"></ui-icon>
<div class="s"><ui-icon name="tsearch"></ui-icon><fit-text w="52" s="16.500" c="#555b5d" style="margin-left:12px">Search</fit-text><ui-icon name="lynx" style="margin-left:112px"></ui-icon></div>
<task-app style="margin-left:3px"><ui-icon name="task"></ui-icon></task-app>
<task-app><ui-icon name="edge"></ui-icon></task-app>
<task-app><ui-icon name="copilotw"></ui-icon></task-app>
<task-app><ui-icon name="purple"></ui-icon></task-app>
<task-app><ui-icon name="store"></ui-icon></task-app>
<task-app><ui-icon name="xbox"></ui-icon></task-app>
<task-app><ui-icon name="todo"></ui-icon><b style="background:#0a6cbd"><fit-text w="8" s="13.500" c="#fff">2</fit-text></b></task-app>
<task-app run><ui-icon name="folder"></ui-icon></task-app>
<task-app run><ui-icon name="spotify"></ui-icon></task-app>
<task-app active><ui-icon name="chrome"></ui-icon><b style="background:#eee;box-shadow:0 0 1px #333"><fit-text w="12" s="17" b="700" c="#222">D</fit-text></b></task-app>
<task-app run><ui-icon name="git"></ui-icon></task-app>
<task-app run><ui-icon name="chrome"></ui-icon><b style="background:#43545b"><fit-text w="8" s="11" b="600" c="#ccd2d4">D</fit-text></b></task-app>
<task-app run><ui-icon name="vscode"></ui-icon></task-app>
<task-app run><ui-icon name="photos"></ui-icon></task-app>
<ui-icon name="up" style="margin-left:84px"></ui-icon><ui-icon name="cloud" style="margin-left:21px"></ui-icon><ui-icon name="pad" style="margin-left:18px"></ui-icon>
<div class="c" style="margin-left:25px;align-items:center"><fit-text w="29" s="14.500" lh="20" c="#1b1b1b">ENG</fit-text><fit-text w="15" s="14.500" lh="20" c="#1b1b1b">IN</fit-text></div>
<ui-icon name="wifi" style="margin-left:22px"></ui-icon><ui-icon name="vol" style="margin-left:10px"></ui-icon><ui-icon name="batt" style="margin-left:10px"></ui-icon>
<div class="c right" style="margin-left:20px"><fit-text w="36" s="14.500" lh="20" c="#1b1b1b">16:00</fit-text><fit-text w="77" s="14.500" lh="20" c="#1b1b1b">23-10-2025</fit-text></div>
<status-strip></status-strip>`);

define('desktop-screen', `:host{display:block;width:1920px;height:1080px;overflow:hidden}`,
  `<tab-strip></tab-strip><address-bar></address-bar><nomad-app></nomad-app><task-bar></task-bar>`);

/* A run of text tracked so that it takes exactly the width in "w". Registered last, once its hosts are in place. */
customElements.define('fit-text', class extends HTMLElement {
  connectedCallback() {
    if (this.shadowRoot) return;
    const a = (n, d) => this.getAttribute(n) || d;
    const w = +a('w', 0), s = +a('s', 16);
    const fam = this.hasAttribute('mono') ? '"DejaVu Sans Mono",monospace' : FONT;
    this.attachShadow({ mode: 'open' }).innerHTML =
      `<style>:host{display:block;flex:none;width:${w}px;text-align:left;font:${a('b', 400)} ${s}px/${a('lh', Math.round(s * 1.4))}px ${fam};white-space:pre;${a('c') ? 'color:' + a('c') : ''}}
       span{display:inline-block}</style><span><slot></slot></span>`;
    const span = this.shadowRoot.querySelector('span');
    const n = this.textContent.length;
    const nat = span.getBoundingClientRect().width;
    if (n > 1) span.style.letterSpacing = ((w - nat) / n).toFixed(3) + 'px';
  }
});
</script>
</body>
</html>
